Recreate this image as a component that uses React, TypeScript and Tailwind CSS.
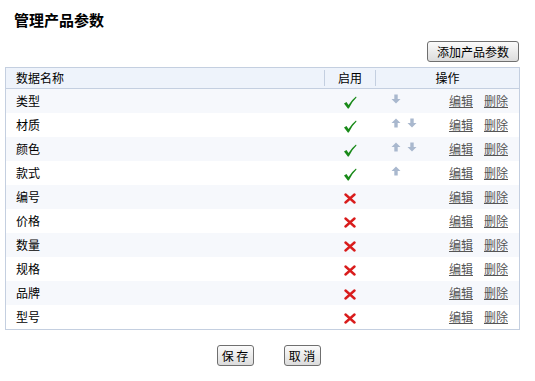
import React from 'react';

const params = [
  { name: '类型', on: true, up: false, down: true },
  { name: '材质', on: true, up: true, down: true },
  { name: '颜色', on: true, up: true, down: true },
  { name: '款式', on: true, up: true, down: false },
  { name: '编号', on: false, up: false, down: false },
  { name: '价格', on: false, up: false, down: false },
  { name: '数量', on: false, up: false, down: false },
  { name: '规格', on: false, up: false, down: false },
  { name: '品牌', on: false, up: false, down: false },
  { name: '型号', on: false, up: false, down: false },
];

const font = { fontFamily: '"Noto Sans CJK SC", "Noto Sans", sans-serif' };

function Check() {
  return (
    <svg width="14" height="13" viewBox="0 0 14 13">
      <path d="M1 7.5 L3.5 6 L5.5 9 Q8.5 4 13 0.5 L13.5 1.5 Q9 5.5 5.8 12.5 L4.8 12.5 Z" fill="#198a19" />
    </svg>
  );
}

function Cross() {
  return (
    <svg width="12" height="11" viewBox="0 0 12 11">
      <path d="M1.5 1.5 L10.5 9.5 M10.5 1.5 L1.5 9.5" stroke="#d91c1c" strokeWidth="2.4" strokeLinecap="round" />
    </svg>
  );
}

function Arrow({ up }: { up: boolean }) {
  return (
    <svg width="10" height="10" viewBox="0 0 10 10" className={up ? '' : 'rotate-180'}>
      <path d="M5 0.5 L9.5 5 L6.7 5 L6.7 9.5 L3.3 9.5 L3.3 5 L0.5 5 Z" fill="#a9b8ce" />
    </svg>
  );
}

function Btn({ children, wide }: { children: React.ReactNode; wide?: boolean }) {
  return (
    <button
      className={`h-[21px] ${wide ? 'px-[9px]' : 'w-[37px] whitespace-pre'} text-[12px] text-black border border-[#6f6f6f] rounded-[3px] bg-gradient-to-b from-[#fbfbfb] to-[#dcdcdc] leading-none`}
    >
      {children}
    </button>
  );
}

export default function App() {
  return (
    <div className="w-[535px] h-[381px] bg-white text-[12px] text-black" style={font}>
      <div className="pt-[10px] pl-[14px] text-[15px] font-bold leading-[20px]">管理产品参数</div>
      <div className="flex justify-end pr-[16px] mt-[11px]">
        <Btn wide>添加产品参数</Btn>
      </div>
      <div className="mx-[5px] mt-[5px] w-[515px] border border-[#c4cfe0]">
        <div className="grid grid-cols-[318px_51px_1fr] h-[21px] bg-[#eef3fb] border-b border-[#c4cfe0] items-center">
          <div className="pl-[10px]">数据名称</div>
          <div className="text-center border-l border-[#c4cfe0] h-[16px] leading-[16px]">启用</div>
          <div className="text-center border-l border-[#c4cfe0] h-[16px] leading-[16px]">操作</div>
        </div>
        {params.map((p, i) => (
          <div
            key={p.name}
            className={`grid grid-cols-[318px_51px_1fr] h-[24px] items-center ${i % 2 === 0 ? 'bg-[#f6f8fc]' : 'bg-white'}`}
          >
            <div className="pl-[10px]">{p.name}</div>
            <div className="flex justify-center pt-[3px]">{p.on ? <Check /> : <Cross />}</div>
            <div className="flex items-center pr-[11px]">
              <div className="flex items-center gap-[6px] pl-[16px] w-[60px] -mt-[5px]">
                {p.up && <Arrow up />}
                {p.down && <Arrow up={false} />}
              </div>
              <div className="ml-auto flex gap-[11px] text-[#555]">
                <a className="underline">编辑</a>
                <a className="underline">删除</a>
              </div>
            </div>
          </div>
        ))}
      </div>
      <div className="flex justify-center gap-[30px] mt-[15px] pl-[2px]">
        <Btn>保 存</Btn>
        <Btn>取 消</Btn>
      </div>
    </div>
  );
}
